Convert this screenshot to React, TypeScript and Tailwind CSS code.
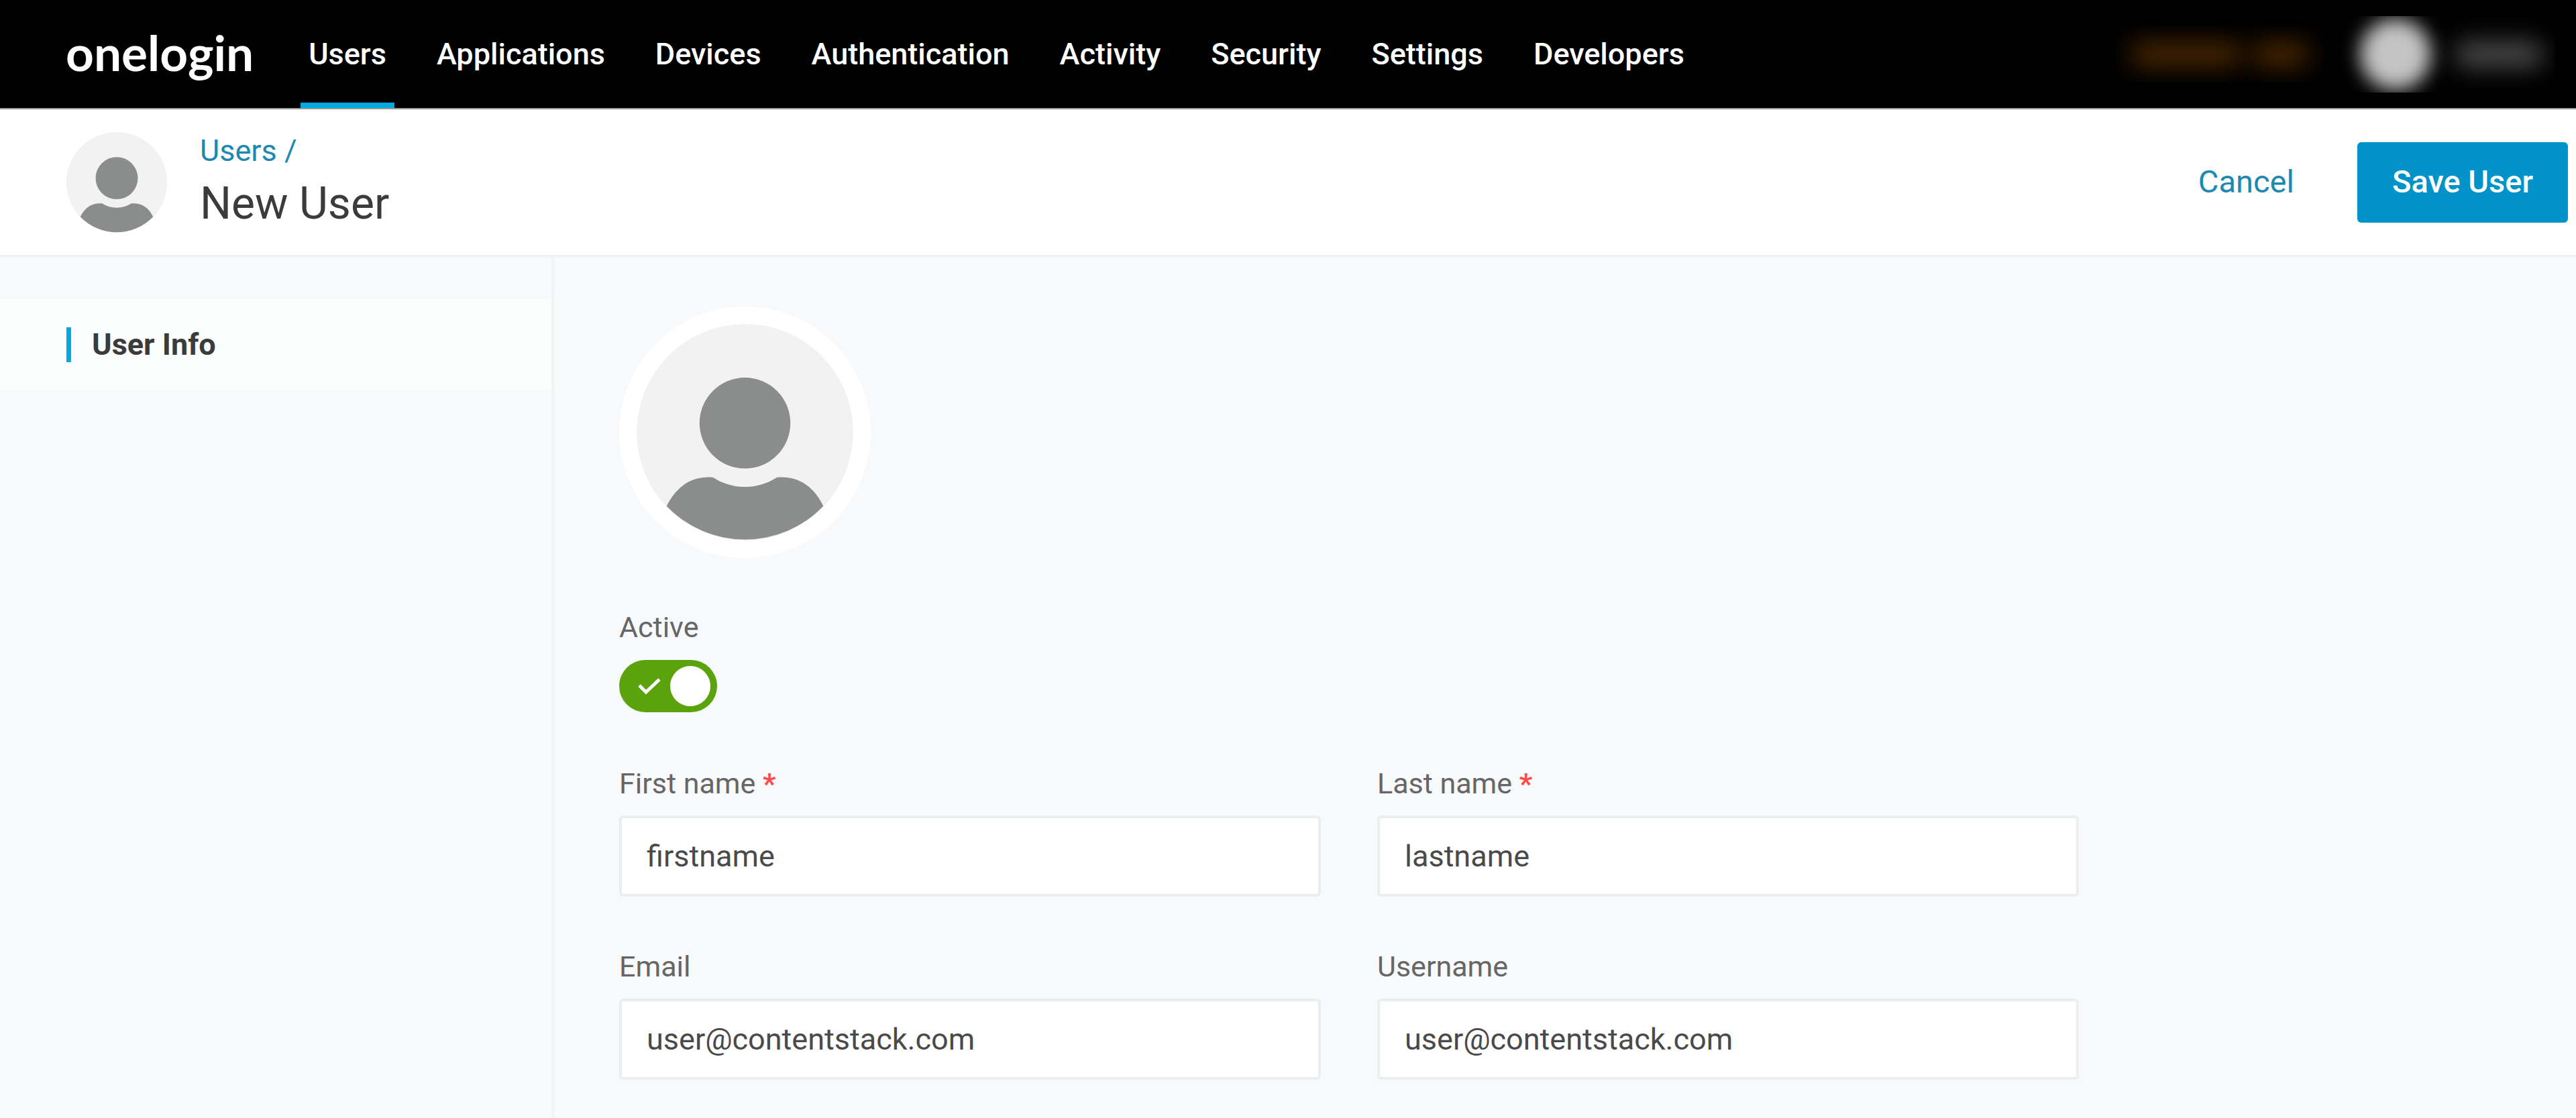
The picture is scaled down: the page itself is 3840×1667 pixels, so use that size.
import { useState } from "react";

const navItems = [
    "Users",
    "Applications",
    "Devices",
    "Authentication",
    "Activity",
    "Security",
    "Settings",
    "Developers",
];

const UserAvatar = ({ className }: { className: string }) => (
    <svg viewBox="0 0 968 968" className={className} aria-hidden="true">
        <circle cx="484" cy="484" r="484" fill="#f2f2f2" />
        <circle cx="484" cy="443" r="203" fill="#8b8d8c" />
        <path
            d="M134 814 C180 722 250 678 342 686 C430 742 538 742 626 686 C718 678 790 722 834 814 A484 484 0 0 1 134 814 Z"
            fill="#8b8d8c"
        />
    </svg>
);

const TopNav = () => (
    <header className="flex items-stretch justify-between bg-black border-b-2 border-[#999999] pl-[98px] pr-[32px]">
        <div className="flex items-stretch">
            <a href="#" className="flex items-center pb-[4px] mr-[70px] text-[73px] leading-[73px] font-bold text-white font-[Lato,sans-serif]">
                onelogin
            </a>
            <nav className="flex items-stretch gap-[51px]">
                {navItems.map((item, i) => (
                    <a
                        key={item}
                        href="#"
                        className={
                            i === 0
                                ? "px-[12px] pt-[57px] pb-[48px] text-[45px] leading-[48px] font-medium text-white border-b-8 border-[#00a9e0]"
                                : "px-[12px] pt-[57px] pb-[48px] text-[45px] leading-[48px] font-medium text-white border-b-8 border-transparent"
                        }
                    >
                        {item}
                    </a>
                ))}
            </nav>
        </div>

        <div className="flex items-center gap-[20px]">
            <div className="flex items-center gap-[10px] h-[84px] px-[20px] overflow-hidden">
                <div className="w-[170px] h-[40px] rounded-full bg-[#452400] blur-[18px]"></div>
                <div className="w-[90px] h-[40px] rounded-full bg-[#452400] blur-[18px]"></div>
            </div>
            <div className="flex items-center gap-[34px] h-[114px] pl-[34px] pr-[16px] overflow-hidden">
                <div className="size-[106px] rounded-full bg-[#c4c4c4] blur-[14px]"></div>
                <div className="w-[134px] h-[38px] rounded-full bg-[#4c4c4c] blur-[18px]"></div>
            </div>
        </div>
    </header>
);

const PageHeader = () => (
    <div className="flex items-center justify-between bg-white border-b-4 border-[#f1f2f3] pl-[99px] pr-[12px] h-[221px]">
        <div className="flex items-center gap-[49px]">
            <UserAvatar className="size-[150px]" />
            <div className="pt-[4px]">
                <a href="#" className="block text-[45px] leading-[60px] text-[#1d89ae]">Users /</a>
                <h1 className="text-[66px] leading-[98px] text-[#3b3b3b]">New User</h1>
            </div>
        </div>
        <div className="flex items-center gap-[42px]">
            <button type="button" className="px-[52px] h-[120px] text-[47px] text-[#1d89ae]">Cancel</button>
            <button type="submit" form="user-form" className="px-[52px] h-[120px] text-[47px] font-medium text-white bg-[#0092c8] rounded-[6px]">
                Save User
            </button>
        </div>
    </div>
);

const Sidebar = () => (
    <aside className="w-[826px] shrink-0 border-r-4 border-[#f1f3f4] pt-[62px]">
        <a href="#" className="flex items-center gap-[31px] h-[136px] pl-[99px] bg-[#fbfdfc] text-[45px] font-bold text-[#3b3b3b]">
            <span className="w-[7px] h-[52px] bg-[#00a9e0]"></span>
            User Info
        </a>
    </aside>
);

type FieldProps = {
    id: string;
    label: string;
    type?: string;
    value: string;
    required?: boolean;
};

const Field = ({ id, label, type = "text", value, required }: FieldProps) => (
    <div className="flex flex-col gap-[20px]">
        <label htmlFor={id} className="text-[43px] leading-[56px] text-[#666666]">
            {label} {required && <span className="text-[#ff4a4a] font-bold">*</span>}
        </label>
        <input
            id={id}
            type={type}
            defaultValue={value}
            className="w-full h-[121px] px-[37px] text-[45px] text-[#4a4a4a] bg-white border-4 border-[#ebeeef] rounded-[6px] outline-none"
        />
    </div>
);

const App = () => {
    const [active, setActive] = useState(true);

    return (
        <div className="min-h-screen flex flex-col bg-[#f8f9fb] font-[Roboto,sans-serif]">
            <TopNav />
            <PageHeader />
            <div className="flex flex-1">
                <Sidebar />
                <main className="flex-1 pl-[97px] pr-[40px] pt-[73px]">
                    <form id="user-form" onSubmit={(e) => e.preventDefault()}>
                        <UserAvatar className="size-[375px] p-[26px] bg-white rounded-full" />

                        <div className="flex flex-col items-start gap-[21px] mt-[75px]">
                            <label htmlFor="active" className="text-[43px] leading-[56px] text-[#666666]">Active</label>
                            <div className="grid items-center">
                                <input
                                    id="active"
                                    type="checkbox"
                                    checked={active}
                                    onChange={(e) => setActive(e.target.checked)}
                                    className="col-start-1 row-start-1 appearance-none w-[146px] h-[78px] rounded-full bg-gray-400 checked:bg-[#5ba30d]"
                                />
                                <span
                                    className={
                                        active
                                            ? "col-start-1 row-start-1 flex items-center justify-between pl-[27px] pr-[10px] pointer-events-none"
                                            : "col-start-1 row-start-1 flex flex-row-reverse items-center justify-between pl-[10px] pr-[27px] pointer-events-none"
                                    }
                                >
                                    <svg viewBox="0 0 36 28" className="w-[36px] h-[28px]" fill="none" stroke="#ffffff" strokeWidth="5">
                                        {active && <path d="M3 13 L13 23 L33 4" />}
                                    </svg>
                                    <span className="size-[60px] rounded-full bg-white"></span>
                                </span>
                            </div>
                        </div>

                        <div className="grid grid-cols-2 gap-x-[84px] gap-y-[76px] max-w-[2176px] mt-[78px]">
                            <Field id="firstname" label="First name" value="firstname" required />
                            <Field id="lastname" label="Last name" value="lastname" required />
                            <Field id="email" label="Email" type="email" value="user@contentstack.com" />
                            <Field id="username" label="Username" value="user@contentstack.com" />
                        </div>
                    </form>
                </main>
            </div>
        </div>
    );
};

export default App;
